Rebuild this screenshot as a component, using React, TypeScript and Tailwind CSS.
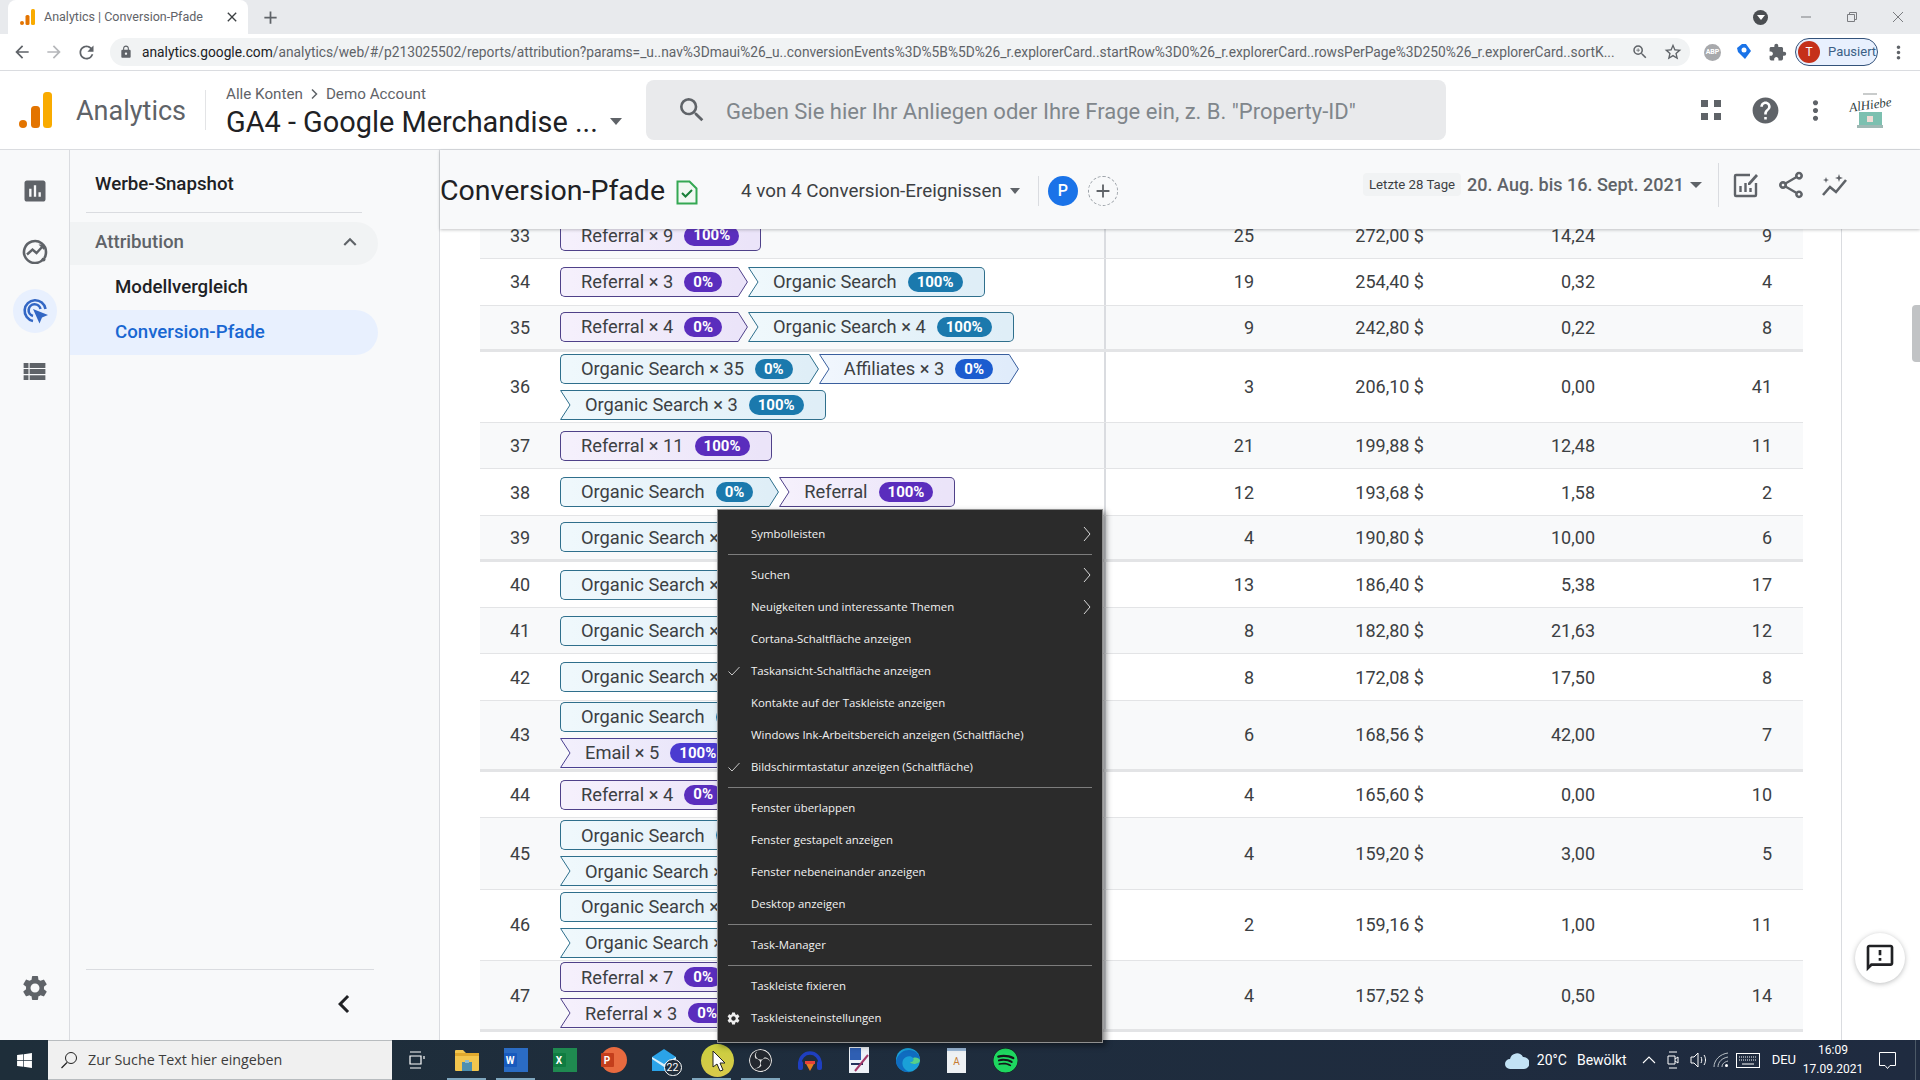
import { ReactNode } from "react";
import {
  MdArrowBack,
  MdArrowForward,
  MdRefresh,
  MdLock,
  MdZoomIn,
  MdStarBorder,
  MdExtension,
  MdMoreVert,
  MdSearch,
  MdHelp,
  MdAssessment,
  MdViewList,
  MdSettings,
  MdExpandLess,
  MdChevronLeft,
  MdAdd,
  MdClose,
  MdOutlineFeedback,
  MdOutlineShare,
} from "react-icons/md";
import { FaSpotify, FaWindows } from "react-icons/fa";
import { SiObsstudio } from "react-icons/si";

type Kind = "ref" | "org" | "aff" | "mail";

interface Chip {
  label: string;
  pct: string;
  kind: Kind;
}

interface Row {
  no: number;
  lines: Chip[][];
  values: [string, string, string, string];
}

const kindStyle = {
  ref: {
    mid: "bg-gradient-to-r from-[#f5f0fc] to-[#ebe4f9] border-[#4f4189]",
    cap: "border-[#4f4189]",
    capStart: "bg-[#f5f0fc]",
    capEnd: "bg-[#ebe4f9]",
    start: "#f5f0fc",
    end: "#ebe4f9",
    line: "#4f4189",
    badge: "bg-[#5a2dbd]",
  },
  mail: {
    mid: "bg-gradient-to-r from-[#f2effc] to-[#e6e2f9] border-[#4a4090]",
    cap: "border-[#4a4090]",
    capStart: "bg-[#f2effc]",
    capEnd: "bg-[#e6e2f9]",
    start: "#f2effc",
    end: "#e6e2f9",
    line: "#4a4090",
    badge: "bg-[#4b3bd0]",
  },
  org: {
    mid: "bg-gradient-to-r from-[#eff8fc] to-[#dfeef7] border-[#2f6f8c]",
    cap: "border-[#2f6f8c]",
    capStart: "bg-[#eff8fc]",
    capEnd: "bg-[#dfeef7]",
    start: "#eff8fc",
    end: "#dfeef7",
    line: "#2f6f8c",
    badge: "bg-[#1b79ad]",
  },
  aff: {
    mid: "bg-gradient-to-r from-[#f0f6fd] to-[#e0ecfb] border-[#3a5f9e]",
    cap: "border-[#3a5f9e]",
    capStart: "bg-[#f0f6fd]",
    capEnd: "bg-[#e0ecfb]",
    start: "#f0f6fd",
    end: "#e0ecfb",
    line: "#3a5f9e",
    badge: "bg-[#1c5ccf]",
  },
};

const ref = (label: string, pct: string): Chip => ({ label, pct, kind: "ref" });
const org = (label: string, pct: string): Chip => ({ label, pct, kind: "org" });

const rows: Row[] = [
  { no: 33, lines: [[ref("Referral × 9", "100%")]], values: ["25", "272,00 $", "14,24", "9"] },
  { no: 34, lines: [[ref("Referral × 3", "0%"), org("Organic Search", "100%")]], values: ["19", "254,40 $", "0,32", "4"] },
  { no: 35, lines: [[ref("Referral × 4", "0%"), org("Organic Search × 4", "100%")]], values: ["9", "242,80 $", "0,22", "8"] },
  {
    no: 36,
    lines: [
      [org("Organic Search × 35", "0%"), { label: "Affiliates × 3", pct: "0%", kind: "aff" }],
      [org("Organic Search × 3", "100%")],
    ],
    values: ["3", "206,10 $", "0,00", "41"],
  },
  { no: 37, lines: [[ref("Referral × 11", "100%")]], values: ["21", "199,88 $", "12,48", "11"] },
  { no: 38, lines: [[org("Organic Search", "0%"), ref("Referral", "100%")]], values: ["12", "193,68 $", "1,58", "2"] },
  { no: 39, lines: [[org("Organic Search × 4", "100%")]], values: ["4", "190,80 $", "10,00", "6"] },
  { no: 40, lines: [[org("Organic Search × 2", "100%")]], values: ["13", "186,40 $", "5,38", "17"] },
  { no: 41, lines: [[org("Organic Search × 6", "100%")]], values: ["8", "182,80 $", "21,63", "12"] },
  { no: 42, lines: [[org("Organic Search × 5", "100%")]], values: ["8", "172,08 $", "17,50", "8"] },
  {
    no: 43,
    lines: [[org("Organic Search", "0%")], [{ label: "Email × 5", pct: "100%", kind: "mail" }]],
    values: ["6", "168,56 $", "42,00", "7"],
  },
  { no: 44, lines: [[ref("Referral × 4", "0%")]], values: ["4", "165,60 $", "0,00", "10"] },
  { no: 45, lines: [[org("Organic Search", "0%")], [org("Organic Search × 2", "100%")]], values: ["4", "159,20 $", "3,00", "5"] },
  { no: 46, lines: [[org("Organic Search × 7", "0%")], [org("Organic Search × 2", "100%")]], values: ["2", "159,16 $", "1,00", "11"] },
  { no: 47, lines: [[ref("Referral × 7", "0%")], [ref("Referral × 3", "0%")]], values: ["4", "157,52 $", "0,50", "14"] },
];

type MenuEntry = { label: string; sub?: boolean; check?: boolean; gear?: boolean } | "sep";

const menu: MenuEntry[] = [
  { label: "Symbolleisten", sub: true },
  "sep",
  { label: "Suchen", sub: true },
  { label: "Neuigkeiten und interessante Themen", sub: true },
  { label: "Cortana-Schaltfläche anzeigen" },
  { label: "Taskansicht-Schaltfläche anzeigen", check: true },
  { label: "Kontakte auf der Taskleiste anzeigen" },
  { label: "Windows Ink-Arbeitsbereich anzeigen (Schaltfläche)" },
  { label: "Bildschirmtastatur anzeigen (Schaltfläche)", check: true },
  "sep",
  { label: "Fenster überlappen" },
  { label: "Fenster gestapelt anzeigen" },
  { label: "Fenster nebeneinander anzeigen" },
  { label: "Desktop anzeigen" },
  "sep",
  { label: "Task-Manager" },
  "sep",
  { label: "Taskleiste fixieren" },
  { label: "Taskleisteneinstellungen", gear: true },
];

function PathChip({ chip, notch, arrow }: { chip: Chip; notch: boolean; arrow: boolean }) {
  const s = kindStyle[chip.kind];
  return (
    <div className="flex h-[30px] shrink-0 items-stretch">
      {notch ? (
        <svg width="11" height="30" className="shrink-0">
          <polygon points="0,0 11,0 11,30 0,30 10,15" fill={s.start} />
          <path d="M11 .5H.6L10 15 .6 29.5H11" fill="none" stroke={s.line} />
        </svg>
      ) : (
        <div className={`w-[11px] rounded-l-[5px] border-y border-l ${s.cap} ${s.capStart}`} />
      )}
      <div className={`flex items-center gap-[11px] border-y ${s.mid} ${notch ? "pl-[14px]" : "pl-[10px]"} ${arrow ? "pr-[15px]" : "pr-[11px]"}`}>
        <span className="whitespace-nowrap text-[18.3px] text-[#3c4043]">{chip.label}</span>
        <span className={`flex h-[20px] items-center rounded-full px-[9px] text-[15px] font-bold text-white ${s.badge}`}>{chip.pct}</span>
      </div>
      {arrow ? (
        <svg width="11" height="30" className="shrink-0">
          <polygon points="0,0 1,0 11,15 1,30 0,30" fill={s.end} />
          <path d="M0 .5H1.2L10.4 15 1.2 29.5H0" fill="none" stroke={s.line} />
        </svg>
      ) : (
        <div className={`w-[11px] rounded-r-[5px] border-y border-r ${s.cap} ${s.capEnd}`} />
      )}
    </div>
  );
}

function TableRow({ row, index }: { row: Row; index: number }) {
  const thick = (row.no - 35) % 4 === 0;
  const shaded = row.no % 2 === 1;
  let chipsLeft = row.lines.flat().length;
  return (
    <div
      className={`grid grid-cols-[80px_544px_150px_170px_171px_177px_31px] items-center text-[18px] text-[#3c4043] ${
        row.lines.length > 1 ? "h-[71.4px]" : "h-[46.25px]"
      } ${shaded ? "bg-[#f8f9fa]" : "bg-white"} ${thick ? "border-b-[3px] border-[#e3e4e6]" : "border-b border-[#e3e4e6]"}`}
      data-row={index}
    >
      <div className="text-center">{row.no}</div>
      <div className="flex flex-col gap-[6px]">
        {row.lines.map((line, i) => (
          <div key={i} className="flex">
            {line.map((chip, j) => {
              const notch = i > 0 || j > 0;
              chipsLeft -= 1;
              return <PathChip key={j} chip={chip} notch={notch} arrow={chipsLeft > 0} />;
            })}
          </div>
        ))}
      </div>
      <div className="flex h-full items-center justify-end border-l-2 border-[#dadce0]">{row.values[0]}</div>
      <div className="text-right">{row.values[1]}</div>
      <div className="text-right">{row.values[2]}</div>
      <div className="text-right">{row.values[3]}</div>
    </div>
  );
}

function ContextMenu() {
  return (
    <div
      className="absolute left-[717px] top-[509px] z-30 w-[386px] border border-[#8f8f8f] bg-[#2b2b2b] py-[8px] text-[12px] text-[#f2f2f2] shadow-[3px_3px_6px_rgba(0,0,0,0.45)]"
      style={{ fontFamily: '"Open Sans", Roboto, sans-serif' }}
    >
      {menu.map((m, i) =>
        m === "sep" ? (
          <div key={i} className="flex h-[9px] items-center px-[10px]">
            <div className="h-px w-full bg-[#7d7d7d]" />
          </div>
        ) : (
          <div key={i} className="relative flex h-[32px] items-center pl-[33px] pr-[11px] text-[11.4px]">
            {m.check && (
              <svg width="14" height="14" viewBox="0 0 14 14" className="absolute left-[9px] top-[9px]">
                <path d="M1.5 7.5 5 11l7.5-8" fill="none" stroke="#c8c8c8" strokeWidth="1" />
              </svg>
            )}
            {m.gear && <MdSettings className="absolute left-[8px] top-[9px] text-[15px] text-[#eeeeee]" />}
            <span className="flex-1 whitespace-nowrap">{m.label}</span>
            {m.sub && (
              <svg width="8" height="16" viewBox="0 0 8 16">
                <path d="M1 1l6 7-6 7" fill="none" stroke="#d8d8d8" strokeWidth="1" />
              </svg>
            )}
          </div>
        ),
      )}
    </div>
  );
}

function TabStrip() {
  return (
    <div className="flex h-[34px] shrink-0 items-end bg-[#e8eaed] pl-[8px]">
      <div className="flex h-[34px] w-[240px] items-center rounded-t-[8px] bg-white pl-[12px] pr-[8px]">
        <svg width="15" height="16" viewBox="0 0 15 16" className="shrink-0">
          <rect x="11" y="0" width="4" height="16" rx="1.5" fill="#f9ab00" />
          <rect x="5.5" y="6" width="4" height="10" rx="1.5" fill="#e37400" />
          <circle cx="2" cy="14" r="2" fill="#e37400" />
        </svg>
        <span className="ml-[9px] flex-1 whitespace-nowrap text-[12.5px] text-[#5f6368]">Analytics | Conversion-Pfade</span>
        <MdClose className="text-[16px] text-[#3c4043]" />
      </div>
      <div className="ml-[4px] flex h-[34px] w-[36px] items-center justify-center">
        <MdAdd className="text-[21px] text-[#5f6368]" />
      </div>
      <div className="flex-1" />
      <div className="mr-[33px] flex h-[34px] w-[15px] items-center">
        <div className="flex h-[15px] w-[15px] items-center justify-center rounded-full bg-[#4a4d51]">
          <div className="h-0 w-0 border-x-[4px] border-t-[5px] border-x-transparent border-t-white" />
        </div>
      </div>
      <div className="flex h-[34px] items-center gap-[36px] pr-[17px]">
        <svg width="10" height="10" viewBox="0 0 10 10">
          <path d="M0 5h10" stroke="#7a7c80" />
        </svg>
        <svg width="10" height="10" viewBox="0 0 10 10">
          <path d="M.5 2.5h7v7h-7zM2.5 2.5v-2h7v7h-2" fill="none" stroke="#7a7c80" />
        </svg>
        <svg width="10" height="10" viewBox="0 0 10 10">
          <path d="M0 0l10 10M10 0L0 10" stroke="#7a7c80" />
        </svg>
      </div>
    </div>
  );
}

function Toolbar() {
  return (
    <div className="flex h-[37px] shrink-0 items-center border-b border-[#dadce0] bg-white pl-[12px]">
      <MdArrowBack className="text-[20px] text-[#5f6368]" />
      <MdArrowForward className="ml-[12px] text-[20px] text-[#b5b7ba]" />
      <MdRefresh className="ml-[12px] text-[21px] text-[#5f6368]" />
      <div className="ml-[13px] flex h-[28px] w-[1580px] items-center rounded-full bg-[#f1f3f4] pl-[9px] pr-[7px]">
        <MdLock className="text-[14px] text-[#5f6368]" />
        <span className="ml-[9px] w-[1490px] overflow-hidden whitespace-nowrap text-[13.78px] text-[#202124]">
          analytics.google.com<span className="text-[#5f6368]">/analytics/web/#/p213025502/reports/attribution?params=_u..nav%3Dmaui%26_u..conversionEvents%3D%5B%5D%26_r.explorerCard..startRow%3D0%26_r.explorerCard..rowsPerPage%3D250%26_r.explorerCard..sortK...</span>
        </span>
        <div className="flex-1" />
        <MdZoomIn className="text-[18px] text-[#5f6368]" />
        <MdStarBorder className="ml-[14px] text-[20px] text-[#5f6368]" />
      </div>
      <div className="ml-[14px] flex h-[17px] w-[17px] items-center justify-center rounded-full bg-[#a8a9ac] text-[7px] font-bold text-white">ABP</div>
      <svg width="16" height="18" viewBox="0 0 16 18" className="ml-[15px]">
        <path d="M1 5l5-4h4l5 7-6 8-7-7z" fill="#1a73e8" />
        <circle cx="8" cy="7" r="2.5" fill="#fff" />
      </svg>
      <MdExtension className="ml-[16px] text-[19px] text-[#5f6368]" />
      <div className="ml-[8px] flex h-[28px] w-[83px] items-center rounded-full border border-[#33527a] bg-[#e8f0fe] pl-[2px]">
        <div className="flex h-[22px] w-[22px] items-center justify-center rounded-full bg-[#c5301a] text-[12px] text-white">T</div>
        <span className="ml-[8px] text-[13px] text-[#3b5f85]">Pausiert</span>
      </div>
      <MdMoreVert className="ml-[10px] text-[21px] text-[#5f6368]" />
    </div>
  );
}

function AppHeader() {
  return (
    <div className="flex h-[79px] shrink-0 items-center border-b border-[#dadce0] bg-white">
      <div className="flex w-[205px] items-center pl-[19px]">
        <svg width="33" height="37" viewBox="0 0 33 37">
          <rect x="24" y="0" width="9" height="36" rx="3.5" fill="#f9ab00" />
          <rect x="12" y="14" width="9" height="22" rx="3.5" fill="#e37400" />
          <circle cx="4" cy="32" r="4" fill="#e37400" />
        </svg>
        <span className="ml-[24px] mt-[3px] text-[27px] text-[#5f6368]">Analytics</span>
      </div>
      <div className="h-[40px] w-px bg-[#e3e4e6]" />
      <div className="ml-[20px] mt-[3px] flex w-[420px] flex-col">
        <div className="flex items-center text-[15.2px] leading-[20px] text-[#5f6368]">
          Alle Konten
          <svg width="9" height="12" viewBox="0 0 9 12" className="mx-[7px]">
            <path d="M2 1.5 6.5 6 2 10.5" fill="none" stroke="#5f6368" strokeWidth="1.5" />
          </svg>
          Demo Account
        </div>
        <div className="flex items-center text-[28.9px] leading-[36px] text-[#202124]">
          GA4 - Google Merchandise ...
          <div className="ml-[12px] h-0 w-0 border-x-[6px] border-t-[7px] border-x-transparent border-t-[#5f6368]" />
        </div>
      </div>
      <div className="flex h-[60px] w-[800px] items-center rounded-[8px] bg-[#e9eaec] pl-[30px]">
        <MdSearch className="text-[32px] text-[#5f6368]" />
        <span className="ml-[18px] mt-[3px] whitespace-nowrap text-[22px] text-[#80868b]">Geben Sie hier Ihr Anliegen oder Ihre Frage ein, z. B. "Property-ID"</span>
      </div>
      <div className="flex-1" />
      <div className="grid h-[20px] w-[20px] grid-cols-2 gap-[6px]">
        <div className="bg-[#5f6368]" />
        <div className="bg-[#5f6368]" />
        <div className="bg-[#5f6368]" />
        <div className="bg-[#5f6368]" />
      </div>
      <MdHelp className="ml-[29px] text-[31px] text-[#5f6368]" />
      <MdMoreVert className="ml-[19px] text-[31px] text-[#5f6368]" />
      <div className="relative ml-[24px] mr-[35px] flex h-[36px] w-[30px] flex-col items-center">
        <div className="mt-[1px] h-[2px] w-[14px] bg-[#c9cccc]" />
        <span
          className="mt-[3px] -rotate-[8deg] whitespace-nowrap text-[13px] italic leading-[13px] text-[#2f4040]"
          style={{ fontFamily: '"Liberation Serif", serif' }}
        >
          AlHiebe
        </span>
        <div className="mt-[1px] flex h-[13px] w-[23px] items-center justify-center bg-[#7cc0b0]">
          <div className="h-[6px] w-[6px] bg-[#f1dcd6]" />
        </div>
        <div className="h-[3px] w-[26px] bg-[#9fb8b4]" />
      </div>
    </div>
  );
}

function RailIcon({ children, active }: { children: ReactNode; active?: boolean }) {
  return (
    <div className={`flex h-[44px] w-[44px] items-center justify-center rounded-full ${active ? "bg-[#e8f0fe]" : ""}`}>{children}</div>
  );
}

function Rail() {
  return (
    <div className="flex w-[70px] shrink-0 flex-col items-center border-r border-[#dadce0] bg-[#f8f9fa] pt-[19px]">
      <div className="flex flex-col items-center gap-[16px]">
        <RailIcon>
          <MdAssessment className="text-[28px] text-[#5f6368]" />
        </RailIcon>
        <RailIcon>
          <svg width="26" height="26" viewBox="0 0 26 26">
            <path d="M21.5 21A11 11 0 1 1 24 14c0 2.5-.6 4.5-1.6 6" fill="none" stroke="#5f6368" strokeWidth="2.6" />
            <circle cx="21.5" cy="21.5" r="2" fill="#5f6368" />
            <path d="M5 16.5l5.5-5 4 3.5 6-6.5" fill="none" stroke="#5f6368" strokeWidth="2.4" />
            <path d="M16.5 6.5H22V12z" fill="#5f6368" />
          </svg>
        </RailIcon>
        <RailIcon active>
          <svg width="28" height="28" viewBox="0 0 28 28">
            <path d="M12 24A10.5 10.5 0 1 1 24.5 12" fill="none" stroke="#3367c4" strokeWidth="2.6" />
            <path d="M12 19A6 6 0 1 1 19.5 12" fill="none" stroke="#3367c4" strokeWidth="2.6" />
            <path d="M12 12l15 6-6 2.5-2.5 6z" fill="#3367c4" />
          </svg>
        </RailIcon>
        <RailIcon>
          <MdViewList className="text-[29px] text-[#5f6368]" />
        </RailIcon>
      </div>
      <div className="flex-1" />
      <MdSettings className="mb-[37px] text-[30px] text-[#5f6368]" />
    </div>
  );
}

function Sidebar() {
  return (
    <div className="flex w-[370px] shrink-0 flex-col border-r border-[#dadce0] bg-[#f8f9fa]">
      <div className="flex h-[62px] items-center pl-[25px] pt-[6px] text-[18.7px] font-medium text-[#202124]">Werbe-Snapshot</div>
      <div className="ml-[16px] h-px w-[276px] bg-[#dadce0]" />
      <div className="mr-[61px] mt-[9px] flex h-[43px] items-center justify-between rounded-r-full bg-[#f1f3f4] pb-[3px] pl-[25px] pr-[15px] text-[18.7px] font-medium text-[#5f6368]">
        Attribution
        <MdExpandLess className="text-[26px]" />
      </div>
      <div className="mr-[61px] flex h-[45px] items-center pl-[45px] text-[18.7px] font-medium text-[#202124]">Modellvergleich</div>
      <div className="mr-[61px] flex h-[45px] items-center rounded-r-full bg-[#e8f0fe] pl-[45px] text-[18.7px] font-medium text-[#1967d2]">Conversion-Pfade</div>
      <div className="flex-1" />
      <div className="ml-[16px] h-px w-[288px] bg-[#dadce0]" />
      <div className="flex h-[70px] items-center justify-end pb-[3px] pr-[77px]">
        <MdChevronLeft className="text-[36px] text-[#202124]" />
      </div>
    </div>
  );
}

function SubHeader() {
  return (
    <div className="relative z-10 flex h-[79px] shrink-0 items-center bg-[#f8f9fa] pt-[3px] shadow-[0_1px_3px_rgba(60,64,67,0.3)]">
      <span className="text-[28.5px] text-[#202124]">Conversion-Pfade</span>
      <svg width="22" height="25" viewBox="0 0 22 25" className="ml-[11px] mt-[3px]">
        <path d="M1.5 1.5h12l7 7v15h-19z" fill="#f1f8f3" stroke="#34a853" strokeWidth="2" />
        <path d="M6 13l3.5 3.5L16 10" fill="none" stroke="#188038" strokeWidth="2" />
      </svg>
      <span className="ml-[43px] whitespace-nowrap text-[18.8px] text-[#3c4043]">4 von 4 Conversion-Ereignissen</span>
      <div className="ml-[8px] h-0 w-0 border-x-[5px] border-t-[6px] border-x-transparent border-t-[#5f6368]" />
      <div className="ml-[18px] h-[30px] w-px bg-[#dadce0]" />
      <div className="ml-[9px] flex h-[30px] w-[30px] items-center justify-center rounded-full bg-[#1a73e8] text-[16px] font-medium text-white">P</div>
      <div className="ml-[10px] flex h-[30px] w-[30px] items-center justify-center rounded-full border border-dashed border-[#9aa0a6]">
        <MdAdd className="text-[22px] text-[#5f6368]" />
      </div>
      <div className="flex-1" />
      <div className="mb-[13px] flex items-center">
        <span className="rounded bg-[#f1f3f4] px-[6px] py-[2px] text-[13.2px] text-[#3c4043]">Letzte 28 Tage</span>
        <span className="ml-[6px] whitespace-nowrap text-[18px] font-medium text-[#5f6368]">20. Aug. bis 16. Sept. 2021</span>
        <div className="ml-[6px] h-0 w-0 border-x-[6px] border-t-[6px] border-x-transparent border-t-[#5f6368]" />
        <div className="ml-[16px] h-[44px] w-px bg-[#dadce0]" />
        <svg width="26" height="26" viewBox="0 0 26 26" className="ml-[14px]">
          <path d="M17 3H3a1 1 0 0 0-1 1v19a1 1 0 0 0 1 1h19a1 1 0 0 0 1-1V11" fill="none" stroke="#5f6368" strokeWidth="2.4" />
          <path d="M7.5 20v-6M12.5 20v-9M17.5 20v-4" stroke="#5f6368" strokeWidth="2.4" />
          <path d="M15 11l8-9 2 2-8 9h-2z" fill="#5f6368" />
        </svg>
        <MdOutlineShare className="ml-[16px] text-[32px] text-[#5f6368]" />
        <svg width="30" height="28" viewBox="0 0 30 28" className="ml-[13px] mr-[70px]">
          <path d="M3 24l7-8 6 5 10-12" fill="none" stroke="#5f6368" strokeWidth="2.6" />
          <path d="M19 3l1 3 3 1-3 1-1 3-1-3-3-1 3-1zM6 6l.8 2.2L9 9l-2.2.8L6 12l-.8-2.2L3 9l2.2-.8z" fill="#5f6368" />
        </svg>
      </div>
    </div>
  );
}

function TaskIcon({ children, under }: { children: ReactNode; under?: boolean }) {
  return (
    <div className="relative flex h-[40px] w-[49px] items-center justify-center">
      {children}
      {under && <div className="absolute bottom-0 left-[5px] h-[2px] w-[39px] bg-[#7fa6bd]" />}
    </div>
  );
}

function Taskbar() {
  return (
    <div className="relative z-20 flex h-[40px] shrink-0 items-center bg-gradient-to-r from-[#1e2e3a] to-[#1f2b40] text-white">
      <div className="flex w-[48px] justify-center">
        <FaWindows className="text-[17px] text-white" />
      </div>
      <div className="flex h-[40px] w-[344px] items-center border-y border-[#b8bcbf] bg-[#f0f0f0] pl-[12px]">
        <svg width="18" height="18" viewBox="0 0 18 18">
          <circle cx="11" cy="7" r="5.5" fill="none" stroke="#222" />
          <path d="M7 11.5 1.5 17" stroke="#222" strokeWidth="1.2" />
        </svg>
        <span className="ml-[10px] text-[14.3px] text-[#3c3c3c]" style={{ fontFamily: '"Open Sans", sans-serif' }}>
          Zur Suche Text hier eingeben
        </span>
      </div>
      <div className="flex w-[50px] justify-center">
        <svg width="16" height="18" viewBox="0 0 16 18">
          <path d="M1 1h11M1 17h11M1 5h11v8H1z M15 5v3" fill="none" stroke="#fff" strokeWidth="1.2" />
        </svg>
      </div>
      <div className="flex">
        <TaskIcon under>
          <svg width="24" height="22" viewBox="0 0 24 22">
            <path d="M0 2a1 1 0 0 1 1-1h7l3 3h12a1 1 0 0 1 1 1v16a1 1 0 0 1-1 1H1a1 1 0 0 1-1-1z" fill="#f3c64e" />
            <rect x="0" y="4" width="24" height="3" fill="#e0a92e" />
            <rect x="7" y="13" width="10" height="9" fill="#4d8fb0" />
            <rect x="10" y="11" width="4" height="3" fill="#8fbcd0" />
          </svg>
        </TaskIcon>
        <TaskIcon under>
          <div className="flex h-[24px] w-[24px] items-center bg-[#2b6cc4]">
            <span className="flex h-[14px] w-[13px] items-center justify-center rounded-[1px] bg-[#185abd] text-[10px] font-bold">W</span>
          </div>
        </TaskIcon>
        <TaskIcon>
          <div className="flex h-[24px] w-[24px] items-center bg-[#1f8a50]">
            <span className="flex h-[14px] w-[13px] items-center justify-center rounded-[1px] bg-[#107c41] text-[10px] font-bold">X</span>
          </div>
        </TaskIcon>
        <TaskIcon>
          <div className="flex h-[26px] w-[26px] items-center rounded-full bg-[#e86a3f]">
            <span className="flex h-[14px] w-[13px] items-center justify-center rounded-[1px] bg-[#c43e1c] text-[10px] font-bold">P</span>
          </div>
        </TaskIcon>
        <TaskIcon>
          <div className="relative ml-[2px]">
            <svg width="24" height="22" viewBox="0 0 24 22">
              <path d="M0 8l12-8 12 8v14H0z" fill="#2ba3e8" />
              <path d="M0 8l12 7 12-7v2L12 18 0 10z" fill="#d8effb" />
            </svg>
            <span className="absolute -bottom-[5px] -right-[6px] flex h-[17px] w-[18px] items-center justify-center rounded-full border border-white bg-[#1f2d3a] text-[10.5px]">22</span>
          </div>
        </TaskIcon>
        <TaskIcon under>
          <div className="relative ml-[12px] h-[33px] w-[33px] rounded-full bg-gradient-to-b from-[#c9cf3e] to-[#d9c94a]">
            <svg width="16" height="22" viewBox="0 0 16 22" className="absolute left-[11px] top-[6px]">
              <path d="M1 1v16l4-3 3 7 3-1-3-7h5z" fill="#fff" stroke="#222" strokeWidth="1" />
            </svg>
          </div>
        </TaskIcon>
        <TaskIcon under>
          <SiObsstudio className="rounded-full bg-[#23272e] text-[23px] text-[#e4e4e4]" />
        </TaskIcon>
        <TaskIcon>
          <svg width="26" height="26" viewBox="0 0 26 26">
            <path d="M3 16A10 10 0 0 1 23 16" fill="none" stroke="#1f3fc0" strokeWidth="3.4" />
            <rect x="1" y="14" width="5" height="9" rx="2" fill="#1f3fc0" />
            <rect x="20" y="14" width="5" height="9" rx="2" fill="#1f3fc0" />
            <path d="M8 15h10l-5 9z" fill="#e67e22" />
            <rect x="8" y="14" width="10" height="3" fill="#e8413a" />
          </svg>
        </TaskIcon>
        <TaskIcon>
          <svg width="20" height="26" viewBox="0 0 20 26">
            <rect width="20" height="26" fill="#eef2f8" />
            <rect x="1" y="1" width="11" height="12" fill="#2f5fb3" />
            <rect x="2" y="16" width="12" height="2" fill="#23315c" />
            <path d="M19 8 6 24" stroke="#a33a6a" strokeWidth="2" />
          </svg>
        </TaskIcon>
        <TaskIcon>
          <svg width="26" height="26" viewBox="0 0 26 26">
            <circle cx="13" cy="13" r="12" fill="#1aa0d8" />
            <path d="M1 14C3 6 9 3 14 3c6 0 11 4 11 10 0 3-3 4-6 4-2 0-4-1-4-2 3 0 4-2 3-4-2-3-8-2-10 2-2 5 1 11 8 12C8 26 1 21 1 14z" fill="#0f6cc0" />
            <path d="M25 13c0 3-3 4-6 4-2 0-4-1-4-2 3 0 4-2 3-4 3-1 6 0 7 2z" fill="#55d08a" />
          </svg>
        </TaskIcon>
        <TaskIcon>
          <div className="flex h-[25px] w-[19px] items-center justify-center border-t-[3px] border-[#9ab7d6] bg-[#eef1f4] text-[10px] text-[#c77b30]">A</div>
        </TaskIcon>
        <TaskIcon>
          <FaSpotify className="rounded-full bg-[#14171a] text-[25px] text-[#1ed760]" />
        </TaskIcon>
      </div>
      <div className="flex-1" />
      <svg width="24" height="17" viewBox="0 0 24 17">
        <path d="M5 17a5 5 0 0 1 0-10 7 7 0 0 1 13-2 6 6 0 0 1 1 12z" fill="#c2e2f5" />
      </svg>
      <span className="ml-[8px] text-[14px]">20°C</span>
      <span className="ml-[10px] text-[14px]">Bewölkt</span>
      <svg width="14" height="8" viewBox="0 0 14 8" className="ml-[15px]">
        <path d="M1 7l6-6 6 6" fill="none" stroke="#fff" strokeWidth="1.1" />
      </svg>
      <svg width="12" height="18" viewBox="0 0 12 18" className="ml-[11px]">
        <path d="M2 1h8M2 17h8M1 5h7v8H1zM8 8l3-2v6l-3-2" fill="none" stroke="#fff" />
      </svg>
      <svg width="18" height="16" viewBox="0 0 18 16" className="ml-[11px]">
        <path d="M1 5h3l4-4v14l-4-4H1zM11 5c1 2 1 4 0 6M14 3c2 3 2 7 0 10" fill="none" stroke="#fff" />
      </svg>
      <svg width="16" height="16" viewBox="0 0 16 16" className="ml-[5px]">
        <path d="M1 15C1 8 7 2 15 1M5 15c0-5 4-9 10-10M9 15c0-3 2-5 6-6" fill="none" stroke="#b9c0c6" />
        <circle cx="13.5" cy="13.5" r="1.5" fill="#fff" />
      </svg>
      <svg width="24" height="15" viewBox="0 0 24 15" className="ml-[7px]">
        <rect x=".5" y=".5" width="23" height="14" fill="none" stroke="#fff" />
        <path d="M3 4h18M3 7h18" stroke="#fff" strokeDasharray="1 1" />
        <path d="M6 11h12" stroke="#fff" />
      </svg>
      <span className="ml-[12px] text-[13px]">DEU</span>
      <div className="ml-[9px] flex w-[56px] flex-col items-center text-[12px] leading-[19px]">
        <span>16:09</span>
        <span className="whitespace-nowrap">17.09.2021</span>
      </div>
      <svg width="17" height="17" viewBox="0 0 17 17" className="ml-[18px] mr-[24px]">
        <path d="M.5.5h16v13H11l-2.5 3-2.5-3H.5z" fill="none" stroke="#fff" />
      </svg>
      <div className="absolute right-[4px] top-0 h-[40px] w-px bg-[#4b5866]" />
    </div>
  );
}

export default function App() {
  return (
    <div
      className="relative flex h-screen w-[1920px] flex-col overflow-hidden bg-white"
      style={{ fontFamily: 'Roboto, "Liberation Sans", sans-serif' }}
    >
      <TabStrip />
      <Toolbar />
      <AppHeader />
      <div className="flex min-h-0 flex-1">
        <Rail />
        <Sidebar />
        <div className="flex min-w-0 flex-1 flex-col">
          <SubHeader />
          <div className="flex min-h-0 flex-1 overflow-hidden bg-white">
            <div className="-mt-[16px] ml-[40px] w-[1323px]">
              {rows.map((row, i) => (
                <TableRow key={row.no} row={row} index={i} />
              ))}
            </div>
            <div className="ml-[38px] h-full w-px bg-[#dadce0]" />
          </div>
        </div>
      </div>
      <Taskbar />
      <div className="absolute right-0 top-[305px] z-10 h-[57px] w-[8px] rounded-l bg-[#c1c3c5]" />
      <div className="absolute left-[1855px] top-[933px] z-10 flex h-[50px] w-[50px] items-center justify-center rounded-full bg-white shadow-[0_1px_5px_rgba(60,64,67,0.35)]">
        <MdOutlineFeedback className="text-[32px] text-[#202124]" />
      </div>
      <ContextMenu />
    </div>
  );
}
